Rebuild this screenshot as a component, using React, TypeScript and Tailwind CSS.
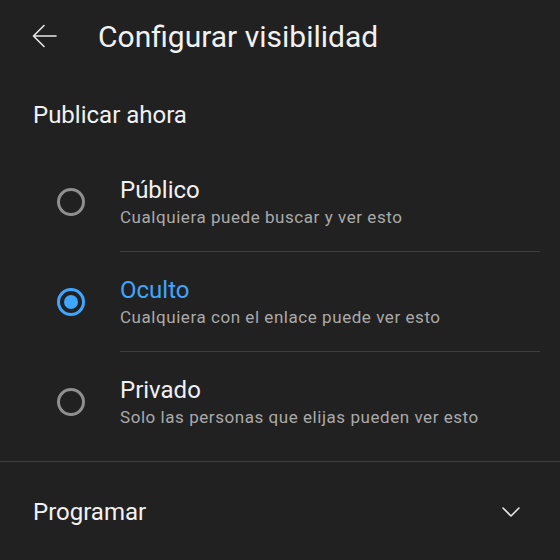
import React from "react";

const options = [
  { title: "Público", desc: "Cualquiera puede buscar y ver esto", selected: false, divider: true },
  { title: "Oculto", desc: "Cualquiera con el enlace puede ver esto", selected: true, divider: true },
  { title: "Privado", desc: "Solo las personas que elijas pueden ver esto", selected: false, divider: false },
];

function Radio({ selected }: { selected: boolean }) {
  return selected ? (
    <div className="w-[28px] h-[28px] rounded-full border-[3px] border-[#3ea6ff] flex items-center justify-center">
      <div className="w-[14px] h-[14px] rounded-full bg-[#3ea6ff]" />
    </div>
  ) : (
    <div className="w-[28px] h-[28px] rounded-full border-[3px] border-[#8f8f8f]" />
  );
}

export default function App() {
  return (
    <div
      className="w-[560px] h-[560px] bg-[#212121] text-white overflow-hidden flex flex-col"
      style={{ fontFamily: "Roboto, 'Noto Sans', sans-serif" }}
    >
      <div className="h-[72px] flex items-center shrink-0">
        <div className="w-[98px] pl-[32px] flex items-center">
          <svg width="25" height="24" viewBox="0 0 25 24" fill="none" stroke="#e8e8e8" strokeWidth="1.6" strokeLinecap="round" strokeLinejoin="round">
            <path d="M24 12H1.5M12 1.5L1.5 12L12 22.5" />
          </svg>
        </div>
        <div className="text-[30px] leading-none text-[#f1f1f1] pt-[1px]">Configurar visibilidad</div>
      </div>
      <div className="h-[80px] flex items-center pl-[33px] pt-[6px] text-[24px] leading-none text-[#f1f1f1] shrink-0">
        Publicar ahora
      </div>
      {options.map((o) => (
        <div key={o.title} className="flex h-[100px] shrink-0">
          <div className="w-[120px] pl-[57px] flex items-center">
            <Radio selected={o.selected} />
          </div>
          <div className={"flex-1 mr-[20px] flex flex-col justify-center " + (o.divider ? "border-b border-[#3d3d3d]" : "")}>
            <div className={"text-[24px] leading-[30px] " + (o.selected ? "text-[#3ea6ff]" : "text-[#f1f1f1]")}>{o.title}</div>
            <div className="text-[17px] leading-[24px] text-[#aaaaaa] tracking-[0.55px]">{o.desc}</div>
          </div>
        </div>
      ))}
      <div className="h-[9px] shrink-0" />
      <div className="border-t border-[#3d3d3d] h-[100px] flex items-center justify-between pl-[33px] pr-[40px] shrink-0">
        <div className="text-[24px] leading-none text-[#f1f1f1]">Programar</div>
        <svg width="18" height="10" viewBox="0 0 18 10" fill="none" stroke="#e8e8e8" strokeWidth="1.6" strokeLinecap="round" strokeLinejoin="round">
          <path d="M1 1L9 9L17 1" />
        </svg>
      </div>
    </div>
  );
}
